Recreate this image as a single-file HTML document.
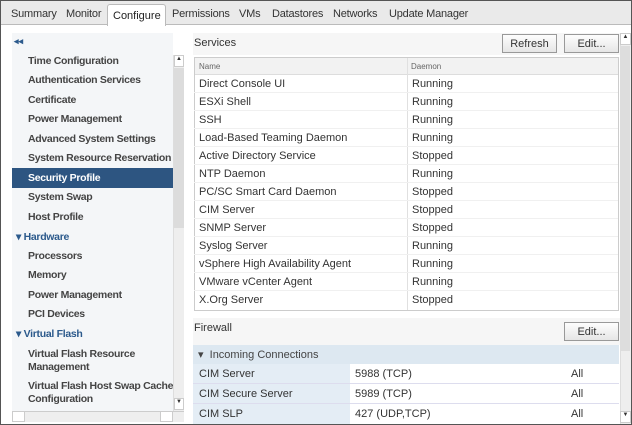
<!DOCTYPE html>
<html><head><style>
*{box-sizing:border-box;margin:0;padding:0}
body{width:632px;height:425px;overflow:hidden;background:#fff;font-family:"Liberation Sans",Arial,sans-serif;font-size:11px;color:#333;position:relative}
.abs{position:absolute}
.frame{position:absolute;left:0;top:0;width:632px;height:425px;border:1px solid #555;pointer-events:none}
.tabs{position:absolute;left:0;top:0;width:632px;height:25px;background:#eaeaea;border-bottom:1px solid #bbb}
.tab{position:absolute;top:8px;font-size:11px;color:#333;letter-spacing:-0.2px}
.tabsel{position:absolute;left:107px;top:4px;width:59px;height:22px;background:#fff;border:1px solid #bbb;border-bottom:none;border-radius:3px 3px 0 0;font-size:11px;padding:5px 0 0 5px;color:#222}
.left{position:absolute;left:12px;top:33px;width:161px;height:378px;background:#f4f6f8}
.nav{position:absolute;left:28px;font-weight:bold;color:#444;font-size:10.5px;letter-spacing:-0.3px;line-height:13px;white-space:nowrap}
.grp{position:absolute;left:16px;color:#2c5a8c;font-weight:bold;font-size:10.5px;letter-spacing:-0.3px}
.sb{position:absolute;background:#eee;border-left:1px solid #ddd}
.row{position:absolute;left:194px;width:424px;height:18px;border-bottom:1px solid #f0f0f0}
.row span{position:absolute;top:3px}
.btn{position:absolute;height:19px;border:1px solid #999;background:linear-gradient(#fdfdfd,#e6e6e6);font-size:11px;text-align:center;padding-top:3px;color:#333}
</style></head><body>
<div class="tabs">
<span class="tab" style="left:11px">Summary</span>
<span class="tab" style="left:66px">Monitor</span>
<div class="tabsel">Configure</div>
<span class="tab" style="left:172px">Permissions</span>
<span class="tab" style="left:239px">VMs</span>
<span class="tab" style="left:272px">Datastores</span>
<span class="tab" style="left:333px">Networks</span>
<span class="tab" style="left:389px">Update Manager</span>
</div>
<div class="left"></div>
<div class="abs" style="left:14px;top:36px;color:#2c5a8c;font-size:9px;font-weight:bold">◂◂</div>
<div class="nav" style="top:55px">Time Configuration</div>
<div class="nav" style="top:74px">Authentication Services</div>
<div class="nav" style="top:94px">Certificate</div>
<div class="nav" style="top:113px">Power Management</div>
<div class="nav" style="top:133px">Advanced System Settings</div>
<div class="nav" style="top:152px">System Resource Reservation</div>
<div class="abs" style="left:12px;top:168px;width:161px;height:20px;background:#2d5581"></div>
<div class="nav" style="top:172px;color:#fff">Security Profile</div>
<div class="nav" style="top:191px">System Swap</div>
<div class="nav" style="top:211px">Host Profile</div>
<div class="grp" style="top:231px">▾ Hardware</div>
<div class="nav" style="top:250px">Processors</div>
<div class="nav" style="top:269px">Memory</div>
<div class="nav" style="top:289px">Power Management</div>
<div class="nav" style="top:308px">PCI Devices</div>
<div class="grp" style="top:328px">▾ Virtual Flash</div>
<div class="nav" style="top:348px">Virtual Flash Resource<br>Management</div>
<div class="nav" style="top:380px">Virtual Flash Host Swap Cache<br>Configuration</div>
<div class="sb" style="left:173px;top:55px;width:11px;height:356px"></div>
<div class="abs" style="left:174px;top:55px;width:10px;height:12px;background:#fff;border:1px solid #ccc;font-size:6px;text-align:center">▲</div>
<div class="abs" style="left:174px;top:68px;width:10px;height:160px;background:#dcdcdc"></div>
<div class="abs" style="left:174px;top:398px;width:10px;height:12px;background:#fff;border:1px solid #ccc;font-size:6px;text-align:center">▼</div>
<div class="abs" style="left:12px;top:411px;width:172px;height:11px;background:#eee;border-top:1px solid #ccc"></div>
<div class="abs" style="left:160px;top:411px;width:13px;height:11px;background:#fff;border:1px solid #ccc"></div>
<div class="abs" style="left:12px;top:411px;width:13px;height:11px;background:#fff;border:1px solid #ccc"></div>
<div class="abs" style="left:193px;top:33px;width:427px;height:22px;background:#f6f6f6"></div>
<div class="abs" style="left:194px;top:37px;font-size:11px;color:#333">Services</div>
<div class="btn" style="left:502px;top:34px;width:55px">Refresh</div>
<div class="btn" style="left:564px;top:34px;width:55px">Edit...</div>
<div class="abs" style="left:194px;top:57px;width:425px;height:254px;border:1px solid #ccc"></div>
<div class="abs" style="left:195px;top:58px;width:423px;height:17px;background:#f2f2f2;border-bottom:1px solid #ddd"></div>
<div class="abs" style="left:407px;top:58px;width:1px;height:252px;background:#e0e0e0"></div>
<div class="abs" style="left:199px;top:62px;font-size:8px;color:#666">Name</div>
<div class="abs" style="left:411px;top:62px;font-size:8px;color:#666">Daemon</div>
<div class="row" style="top:75px"><span style="left:5px">Direct Console UI</span><span style="left:218px">Running</span></div>
<div class="row" style="top:93px"><span style="left:5px">ESXi Shell</span><span style="left:218px">Running</span></div>
<div class="row" style="top:111px"><span style="left:5px">SSH</span><span style="left:218px">Running</span></div>
<div class="row" style="top:129px"><span style="left:5px">Load-Based Teaming Daemon</span><span style="left:218px">Running</span></div>
<div class="row" style="top:147px"><span style="left:5px">Active Directory Service</span><span style="left:218px">Stopped</span></div>
<div class="row" style="top:165px"><span style="left:5px">NTP Daemon</span><span style="left:218px">Running</span></div>
<div class="row" style="top:183px"><span style="left:5px">PC/SC Smart Card Daemon</span><span style="left:218px">Stopped</span></div>
<div class="row" style="top:201px"><span style="left:5px">CIM Server</span><span style="left:218px">Stopped</span></div>
<div class="row" style="top:219px"><span style="left:5px">SNMP Server</span><span style="left:218px">Stopped</span></div>
<div class="row" style="top:237px"><span style="left:5px">Syslog Server</span><span style="left:218px">Running</span></div>
<div class="row" style="top:255px"><span style="left:5px">vSphere High Availability Agent</span><span style="left:218px">Running</span></div>
<div class="row" style="top:273px"><span style="left:5px">VMware vCenter Agent</span><span style="left:218px">Running</span></div>
<div class="row" style="top:291px;border:none"><span style="left:5px">X.Org Server</span><span style="left:218px">Stopped</span></div>
<div class="abs" style="left:193px;top:318px;width:427px;height:27px;background:#f6f6f6"></div>
<div class="abs" style="left:194px;top:322px;color:#333">Firewall</div>
<div class="btn" style="left:564px;top:322px;width:55px">Edit...</div>
<div class="abs" style="left:193px;top:345px;width:426px;height:19px;background:#dde8f1"></div>
<div class="abs" style="left:198px;top:348px;color:#444">▾ &nbsp;Incoming Connections</div>
<div class="abs" style="left:193px;top:364px;width:157px;height:61px;background:#e4edf5"></div>
<div class="abs" style="left:193px;top:383px;width:426px;height:1px;background:#dde"></div>
<div class="abs" style="left:193px;top:403px;width:426px;height:1px;background:#dde"></div>
<div class="abs" style="left:199px;top:368px">CIM Server</div><div class="abs" style="left:355px;top:368px">5988 (TCP)</div><div class="abs" style="left:571px;top:368px">All</div>
<div class="abs" style="left:199px;top:388px">CIM Secure Server</div><div class="abs" style="left:355px;top:388px">5989 (TCP)</div><div class="abs" style="left:571px;top:388px">All</div>
<div class="abs" style="left:199px;top:408px">CIM SLP</div><div class="abs" style="left:355px;top:408px">427 (UDP,TCP)</div><div class="abs" style="left:571px;top:408px">All</div>
<div class="sb" style="left:620px;top:33px;width:11px;height:391px"></div>
<div class="abs" style="left:620px;top:33px;width:11px;height:12px;background:#fff;border:1px solid #ccc;font-size:6px;text-align:center">▲</div>
<div class="abs" style="left:621px;top:46px;width:9px;height:305px;background:#ddd"></div>
<div class="abs" style="left:620px;top:411px;width:11px;height:12px;background:#fff;border:1px solid #ccc;font-size:6px;text-align:center">▼</div>
<div class="frame"></div>
</body></html>
